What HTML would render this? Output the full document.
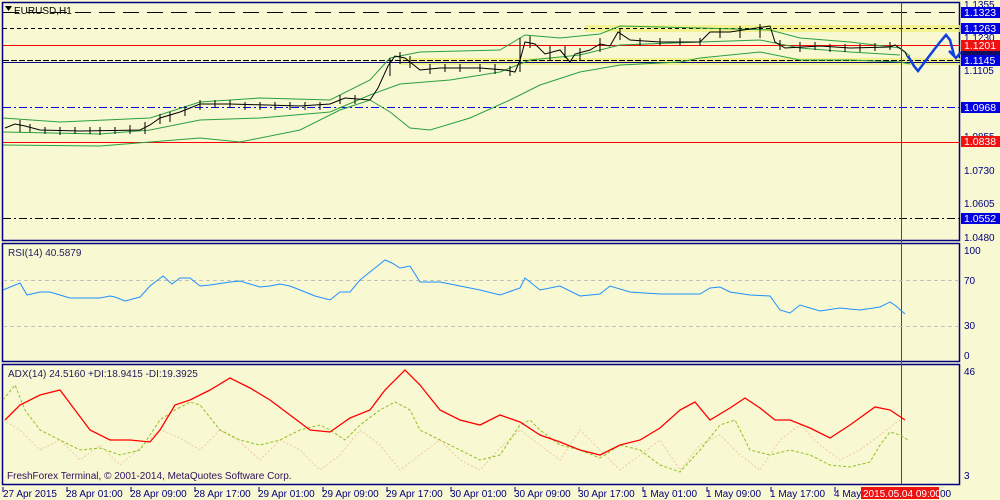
<!DOCTYPE html>
<html><head><style>
body{margin:0;background:#f8f8d2;}
svg{display:block;font-family:"Liberation Sans",sans-serif;}
</style></head><body>
<svg width="1000" height="500" viewBox="0 0 1000 500">
<rect width="1000" height="500" fill="#f8f8d2"/>
<g fill="none" stroke="#000080" stroke-width="1.5">
<rect x="2.5" y="2.5" width="957" height="238"/>
<rect x="2.5" y="243.5" width="957" height="118"/>
<rect x="2.5" y="364.5" width="957" height="120"/>
</g>
<rect x="585" y="25" width="375" height="7" fill="#f0f080" opacity="0.8"/>
<rect x="400" y="58" width="560" height="7" fill="#f0f080" opacity="0.8"/>
<line x1="3" y1="12.5" x2="960" y2="12.5" stroke="#000" stroke-dasharray="16,8"/>
<line x1="3" y1="28.5" x2="960" y2="28.5" stroke="#000" stroke-dasharray="4,3"/>
<line x1="3" y1="45.5" x2="960" y2="45.5" stroke="#f00"/>
<line x1="3" y1="60.5" x2="960" y2="60.5" stroke="#000" stroke-dasharray="6,2"/>
<line x1="3" y1="62.5" x2="960" y2="62.5" stroke="#000080"/>
<line x1="3" y1="107.5" x2="960" y2="107.5" stroke="#00f" stroke-dasharray="8,3,2,3"/>
<line x1="3" y1="142.5" x2="960" y2="142.5" stroke="#f00"/>
<line x1="3" y1="218.5" x2="960" y2="218.5" stroke="#000" stroke-dasharray="8,3,2,3"/>
<g fill="none" stroke="#2aa040" stroke-width="1">
<polyline points="3,118 60,122 150,118 200,102 260,98 330,100 370,80 390,58 420,52 500,50 525,35 560,38 600,34 620,26 700,28 770,30 800,38 850,42 900,48 910,56"/>
<polyline points="3,145 100,146 150,142 200,138 240,142 300,130 340,110 370,100 390,112 410,128 430,130 470,118 510,100 540,85 580,72 620,65 680,62 700,58 760,52 800,60 850,60 900,62 910,64"/>
<polyline points="3,132 100,134 150,130 200,120 260,118 330,112 370,95 400,84 450,80 500,72 530,60 580,55 620,45 700,42 760,40 800,48 850,52 900,55"/>
</g>
<polyline fill="none" stroke="#000" stroke-width="1" points="5,128 15,124 25,126 40,130 80,131 140,130 150,125 160,118 180,112 200,104 230,104 300,106 330,104 345,98 370,100 378,88 388,66 395,56 405,58 415,66 420,70 440,68 480,68 505,70 515,72 520,60 525,42 535,44 545,54 560,50 570,62 575,54 590,50 600,44 610,46 618,32 630,40 660,42 700,42 710,32 730,32 770,26 775,42 785,48 820,46 850,48 890,47 895,45 905,52 908,58"/>
<g stroke="#000" stroke-width="1">
<path d="M20,120V132M30,124V132M45,127V134M60,127V135M75,127V134M90,127V134M100,127V135M115,127V134M130,125V134M145,122V134M160,114V124M170,112V122M185,106V116M200,100V110M215,100V108M230,100V108M245,102V110M260,102V110M275,102V110M290,102V110M305,102V110M320,102V110M340,95V104M355,95V104M390,58V76M400,52V64M410,56V68M430,64V74M445,64V72M460,64V72M480,64V72M495,64V74M510,66V76M520,38V72M530,36V48M550,46V60M565,46V58M580,48V60M600,38V52M620,28V40M640,38V46M660,38V46M680,38V46M700,38V46M720,28V38M740,26V38M760,24V38M780,40V50M800,42V52M815,42V50M830,44V52M845,44V52M860,44V52M875,43V51M890,42V50"/>
</g>
<line x1="901.5" y1="3" x2="901.5" y2="484" stroke="#f00"/>
<polyline fill="none" stroke="#1040e0" stroke-width="2.5" points="908,56 914,66 918,71 930,55 940,42 946,35 950,40 954,55 949,51 956,58 961,52"/>
<line x1="3" y1="280.5" x2="960" y2="280.5" stroke="#c0c0c0" stroke-dasharray="4,3"/>
<line x1="3" y1="326.5" x2="960" y2="326.5" stroke="#c0c0c0" stroke-dasharray="4,3"/>
<polyline fill="none" stroke="#1e90ff" stroke-width="1" points="3,290 20,283 27,295 40,292 50,292 60,295 70,298 100,298 110,296 115,297 125,301 140,297 150,286 163,276 172,284 180,278 190,278 200,286 210,285 230,282 240,281 260,287 270,286 280,284 290,286 300,290 315,296 330,300 340,292 350,292 360,280 370,272 385,260 392,263 400,268 410,266 420,282 440,282 460,286 480,290 500,295 520,288 525,278 540,290 560,286 580,296 600,294 610,286 630,292 660,294 700,294 710,288 720,287 730,292 750,295 770,296 780,310 790,313 800,305 820,311 840,308 860,310 880,307 890,302 896,306 905,314"/>
<polyline fill="none" stroke="#f0c8a0" stroke-width="1" stroke-dasharray="2,2" points="3,420 20,430 40,450 60,440 80,460 100,445 120,465 140,448 160,430 180,438 200,450 220,430 240,442 260,460 280,440 300,450 320,470 340,455 360,430 380,445 400,470 420,455 440,440 460,460 480,470 500,448 520,430 540,445 560,460 580,430 600,450 620,470 640,455 660,440 680,470 700,445 720,435 740,455 760,470 780,440 800,425 820,445 840,460 860,450 880,435 900,420"/>
<polyline fill="none" stroke="#90c020" stroke-width="1" stroke-dasharray="3,2" points="3,400 15,385 25,410 40,430 60,440 80,450 100,448 120,455 140,450 160,420 175,410 190,402 200,405 220,430 240,440 260,445 280,440 300,430 320,425 330,430 345,440 360,425 380,410 395,402 410,410 420,430 440,440 460,450 480,460 500,455 510,440 520,425 530,420 540,430 560,445 580,450 600,458 620,445 640,450 660,465 680,472 700,450 720,425 735,420 750,450 770,455 790,450 810,455 830,465 850,467 870,462 880,445 890,432 900,435 908,440"/>
<polyline fill="none" stroke="#f00" stroke-width="1.3" points="5,420 20,405 40,395 60,390 75,410 90,430 110,440 130,440 150,442 160,430 175,405 190,400 210,390 230,378 250,388 270,400 290,415 310,430 330,432 350,418 370,410 385,390 405,370 420,385 440,410 460,420 480,425 500,415 520,422 540,435 560,442 580,450 600,455 620,445 640,440 660,428 680,410 695,402 710,420 730,408 745,398 760,408 775,420 790,420 810,428 830,438 850,425 875,407 890,410 905,420"/>
<g font-size="10" fill="#000">
<text x="14" y="14">EURUSD,H1</text>
<text x="8" y="256" fill="#202060">RSI(14) 40.5879</text>
<text x="8" y="377" fill="#202060">ADX(14) 24.5160 +DI:18.9415 -DI:19.3925</text>
<text x="7" y="479" fill="#301060">FreshForex Terminal, © 2001-2014, MetaQuotes Software Corp.</text>
</g>
<path d="M5,6h7l-3.5,5z" fill="#000"/>
<g font-size="10" fill="#000080">
<text x="964" y="8">1.1355</text>
<text x="964" y="41">1.1230</text>
<text x="964" y="74">1.1105</text>
<text x="964" y="140">1.0855</text>
<text x="964" y="174">1.0730</text>
<text x="964" y="207">1.0605</text>
<text x="964" y="241">1.0480</text>
<text x="964" y="254">100</text>
<text x="964" y="284">70</text>
<text x="964" y="329">30</text>
<text x="964" y="359">0</text>
<text x="964" y="375">46</text>
<text x="964" y="479">3</text>
</g>
<g font-size="10.5" fill="#fff">
<rect x="961" y="7" width="39" height="11" fill="#0000e0"/><text x="964" y="16">1.1323</text>
<rect x="961" y="23" width="39" height="11" fill="#0000e0"/><text x="964" y="32">1.1263</text>
<rect x="961" y="40" width="39" height="11" fill="#f01010"/><text x="964" y="49">1.1201</text>
<rect x="961" y="51" width="39" height="4" fill="#101060"/>
<rect x="961" y="55" width="39" height="11" fill="#0000e0"/><text x="964" y="64">1.1145</text>
<rect x="961" y="102" width="39" height="11" fill="#0000e0"/><text x="964" y="111">1.0968</text>
<rect x="961" y="136" width="39" height="11" fill="#f01010"/><text x="964" y="145">1.0838</text>
<rect x="961" y="213" width="39" height="11" fill="#0000e0"/><text x="964" y="222">1.0552</text>
</g>
<g stroke="#000080"><path d="M3,487V492M67,487V492M131,487V492M195,487V492M259,487V492M323,487V492M387,487V492M451,487V492M515,487V492M579,487V492M643,487V492M707,487V492M771,487V492M835,487V492"/></g>
<g font-size="10" fill="#000080">
<text x="3" y="497">27 Apr 2015</text>
<text x="66" y="497">28 Apr 01:00</text>
<text x="130" y="497">28 Apr 09:00</text>
<text x="194" y="497">28 Apr 17:00</text>
<text x="258" y="497">29 Apr 01:00</text>
<text x="322" y="497">29 Apr 09:00</text>
<text x="386" y="497">29 Apr 17:00</text>
<text x="450" y="497">30 Apr 01:00</text>
<text x="514" y="497">30 Apr 09:00</text>
<text x="578" y="497">30 Apr 17:00</text>
<text x="642" y="497">1 May 01:00</text>
<text x="706" y="497">1 May 09:00</text>
<text x="770" y="497">1 May 17:00</text>
<text x="834" y="497">4 May</text>
<text x="940" y="497">00</text>
</g>
<rect x="861" y="487" width="78" height="12" fill="#f01010"/>
<text x="863" y="497" font-size="10" fill="#fff">2015.05.04 09:00</text>
</svg>
</body></html>
